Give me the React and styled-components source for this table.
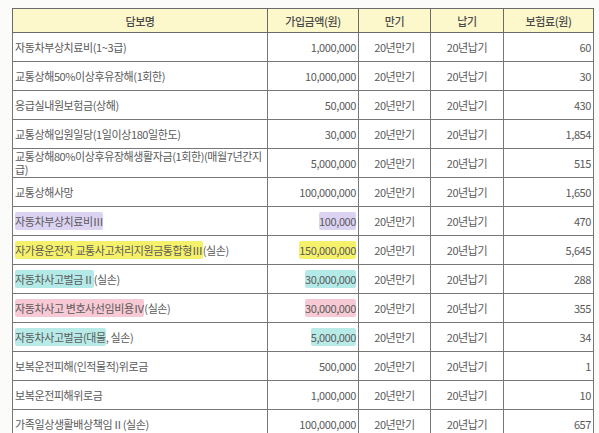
import React from "react";
import styled, { createGlobalStyle } from "styled-components";

const GlobalStyle = createGlobalStyle`
  body {
    margin: 0;
    background: #fbfbf9;
    font-family: "Noto Sans CJK KR", "Noto Sans", sans-serif;
  }
`;

const rows = [
  { name: "자동차부상치료비(1~3급)", amount: "1,000,000", premium: "60" },
  { name: "교통상해50%이상후유장해(1회한)", amount: "10,000,000", premium: "30" },
  { name: "응급실내원보험금(상해)", amount: "50,000", premium: "430" },
  { name: "교통상해입원일당(1일이상180일한도)", amount: "30,000", premium: "1,854" },
  {
    name: "교통상해80%이상후유장해생활자금(1회한)(매월7년간지급)",
    amount: "5,000,000",
    premium: "515",
  },
  { name: "교통상해사망", amount: "100,000,000", premium: "1,650" },
  { mark: "자동차부상치료비Ⅲ", rest: "", amount: "100,000", premium: "470", color: "#dcd3f3" },
  {
    mark: "자가용운전자 교통사고처리지원금통합형Ⅲ",
    rest: "(실손)",
    amount: "150,000,000",
    premium: "5,645",
    color: "#f6f16a",
  },
  { mark: "자동차사고벌금Ⅱ", rest: "(실손)", amount: "30,000,000", premium: "288", color: "#b3e9e6" },
  {
    mark: "자동차사고 변호사선임비용Ⅳ",
    rest: "(실손)",
    amount: "30,000,000",
    premium: "355",
    color: "#f7c9d4",
  },
  { mark: "자동차사고벌금(대물", rest: ", 실손)", amount: "5,000,000", premium: "34", color: "#b8ebe8" },
  { name: "보복운전피해(인적물적)위로금", amount: "500,000", premium: "1" },
  { name: "보복운전피해위로금", amount: "1,000,000", premium: "10" },
  { name: "가족일상생활배상책임Ⅱ(실손)", amount: "100,000,000", premium: "657" },
];

const Page = styled.div`
  padding: 8px 0 0 12px;
`;

const Table = styled.table`
  width: 581px;
  border-collapse: collapse;
  table-layout: fixed;
  color: #5a5a5a;
  font-size: 11px;
  letter-spacing: -0.4px;
  background: #fff;
`;

const HeadCell = styled.th`
  height: 23px;
  padding: 0;
  background: #fcf8cc;
  border: 1px solid #6a6a6a;
  font-weight: 500;
  color: #4a4a4a;
  text-align: center;
`;

const Cell = styled.td`
  height: 28px;
  padding: 0 2px;
  border: 1px solid #777;
  text-align: ${(p) => p.$align || "left"};
  line-height: 13px;
  word-break: break-all;
  white-space: ${(p) => (p.$align === "left" ? "normal" : "nowrap")};
`;

const Mark = styled.span`
  background: ${(p) => p.$color};
  border-radius: 2px;
  padding: 1px 0;
`;

export default function App() {
  return (
    <>
      <GlobalStyle />
      <Page>
        <Table>
          <colgroup>
            <col style={{ width: 255 }} />
            <col style={{ width: 91 }} />
            <col style={{ width: 72 }} />
            <col style={{ width: 73 }} />
            <col style={{ width: 90 }} />
          </colgroup>
          <thead>
            <tr>
              <HeadCell>담보명</HeadCell>
              <HeadCell>가입금액(원)</HeadCell>
              <HeadCell>만기</HeadCell>
              <HeadCell>납기</HeadCell>
              <HeadCell>보험료(원)</HeadCell>
            </tr>
          </thead>
          <tbody>
            {rows.map((r, i) => (
              <tr key={i}>
                <Cell $align="left">
                  {r.mark ? (
                    <>
                      <Mark $color={r.color}>{r.mark}</Mark>
                      {r.rest}
                    </>
                  ) : (
                    r.name
                  )}
                </Cell>
                <Cell $align="right">
                  {r.color ? <Mark $color={r.color}>{r.amount}</Mark> : r.amount}
                </Cell>
                <Cell $align="center">20년만기</Cell>
                <Cell $align="center">20년납기</Cell>
                <Cell $align="right">{r.premium}</Cell>
              </tr>
            ))}
          </tbody>
        </Table>
      </Page>
    </>
  );
}
